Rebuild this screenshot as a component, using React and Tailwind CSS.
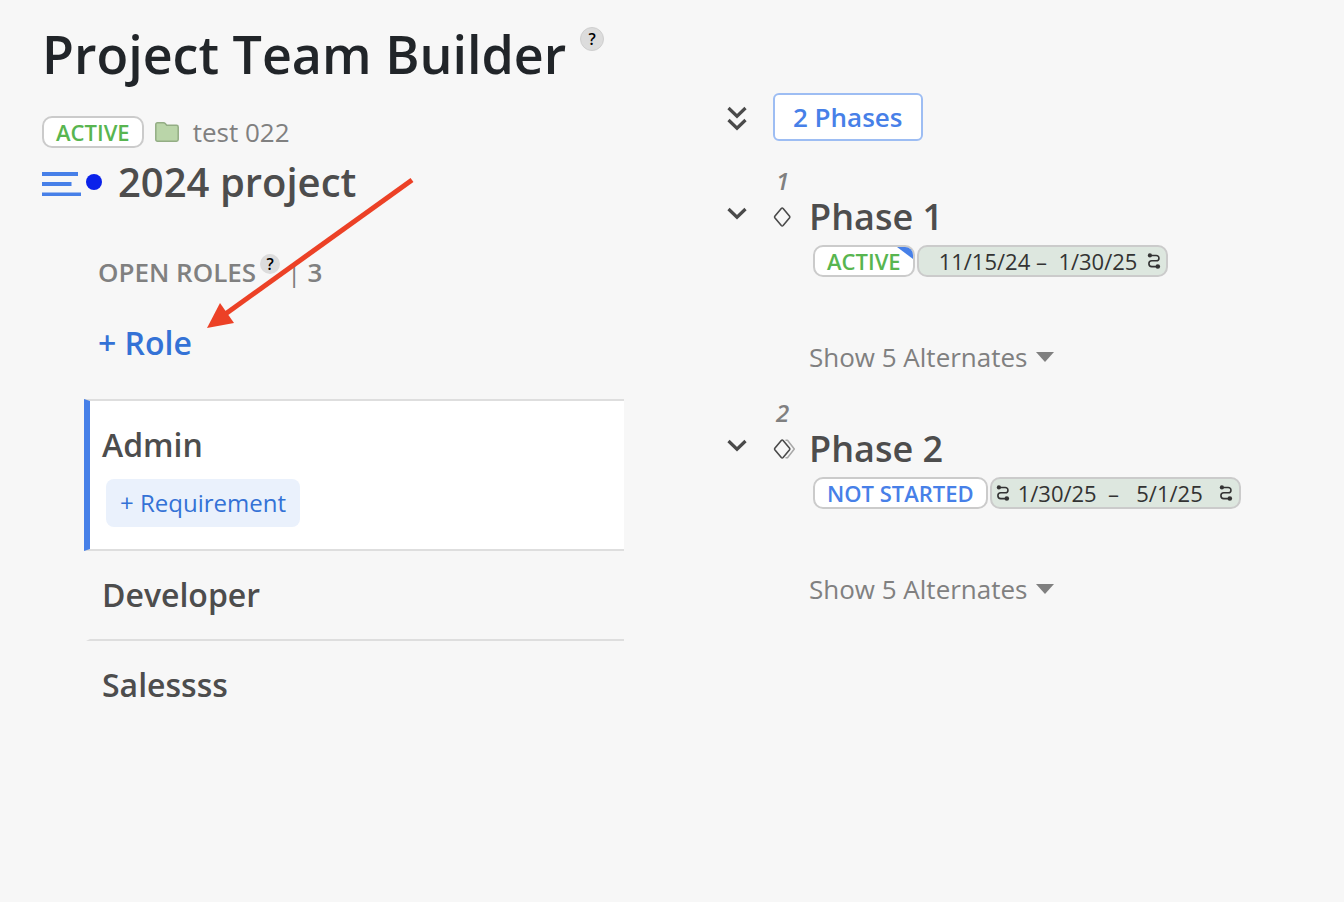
import clsx from "clsx";

const roles = [{ name: "Admin", selected: true }, { name: "Developer" }, { name: "Salessss" }];

const phases = [
  {
    number: 1,
    name: "Phase 1",
    status: "ACTIVE",
    flagged: true,
    dates: "11/15/24 –  1/30/25",
    datesClass: "pl-4",
    endLinkClass: "ml-[10px]",
  },
  {
    number: 2,
    name: "Phase 2",
    status: "NOT STARTED",
    linkedStart: true,
    stacked: true,
    dates: "1/30/25  –   5/1/25",
    datesClass: "pl-1",
    endLinkClass: "ml-4",
  },
];

const Help = ({ className, label }) => (
  <button
    type="button"
    aria-label={label}
    className={clsx(
      "flex shrink-0 items-center justify-center rounded-full bg-[#dcdcdc] font-semibold text-black",
      className
    )}
  >
    ?
  </button>
);

const StatusBadge = ({ status, flagged }) => (
  <span
    className={clsx(
      "relative flex h-8 items-center overflow-hidden rounded-[10px] border-2 border-[#cbcbcb] bg-white px-3 text-[22px] leading-7 font-semibold whitespace-nowrap",
      status === "ACTIVE" ? "text-[#58b550]" : "text-[#4780e8]"
    )}
  >
    {status}
    {flagged && (
      <svg className="absolute top-0 right-0 h-3 w-4" viewBox="0 0 16 12" fill="#4780e8">
        <path d="M0 0H16V12Z" />
      </svg>
    )}
  </span>
);

const LinkIcon = ({ className }) => (
  <svg className={clsx("h-4 w-[14px] shrink-0", className)} viewBox="0 0 14 16" fill="none">
    <path
      d="M3 2.5H9.3A2.6 2.6 0 0 1 9.3 7.8H4.8A2.9 2.9 0 0 0 4.8 13.6H10.5"
      stroke="#333"
      strokeWidth="1.6"
    />
    <circle cx="2.9" cy="2.4" r="2.1" fill="#333" />
    <circle cx="10.8" cy="13.5" r="2.3" fill="#333" />
  </svg>
);

const DateBadge = ({ phase }) => (
  <span className="flex h-8 w-[251px] items-center rounded-[10px] border-2 border-[#cbcbcb] bg-[#dde7df] px-1 text-[22px] leading-7 text-[#333]">
    {phase.linkedStart && <LinkIcon className="mr-1" />}
    <span className={clsx("whitespace-pre", phase.datesClass)}>{phase.dates}</span>
    <LinkIcon className={phase.endLinkClass} />
  </span>
);

const Chevron = ({ double }) => (
  <svg
    className={double ? "h-[26px] w-5" : "h-[14px] w-5"}
    viewBox={double ? "0 0 20 26" : "0 0 20 14"}
    fill="none"
    stroke="#4a4a4a"
    strokeWidth="3.2"
  >
    <path d="M1.5 2L10 10.2L18.5 2" />
    {double && <path d="M1.5 14L10 22.2L18.5 14" />}
  </svg>
);

const PhaseMarker = ({ stacked }) => (
  <svg className="h-6 w-6" viewBox="0 0 24 24" fill="none" strokeLinejoin="round">
    {stacked && (
      <path d="M12.5 3.3H14.5L21.3 12L14.5 20.8H12.5" stroke="#a8a8a8" strokeWidth="1.5" />
    )}
    <path
      d="M8.3 3.5Q9.2 2.5 10.1 3.5L16.6 11.3Q17.1 12 16.6 12.7L10.1 20.5Q9.2 21.5 8.3 20.5L1.8 12.7Q1.3 12 1.8 11.3Z"
      fill="#f7f7f7"
      stroke="#4a4a4a"
      strokeWidth="1.6"
    />
  </svg>
);

const Role = ({ role }) => (
  <li
    className={clsx(
      "border-b-2 border-[#dedede] pl-3 last:border-b-0",
      role.selected
        ? "border-t-2 border-l-[6px] border-l-[#4780e8] bg-white pt-6 pb-[22px]"
        : "ml-[2px] border-l-4 border-l-transparent py-6"
    )}
  >
    <h3 className="text-[32px] leading-10 font-semibold">{role.name}</h3>
    {role.selected && (
      <button
        type="button"
        className="mt-[14px] ml-1 h-12 rounded-lg bg-[#eaf1fc] px-[14px] text-2xl text-[#3472d6]"
      >
        + Requirement
      </button>
    )}
  </li>
);

const Phase = ({ phase }) => (
  <article className="grid grid-cols-[46px_36px_1fr]">
    <span className="col-start-2 pl-[3px] text-2xl leading-6 font-semibold text-[#808080] italic">
      {phase.number}
    </span>
    <button type="button" aria-label="Collapse phase" className="col-start-1 flex h-12 pt-[14px]">
      <Chevron />
    </button>
    <span className="flex h-12 items-center">
      <PhaseMarker stacked={phase.stacked} />
    </span>
    <h2 className="text-4xl leading-12 font-semibold">{phase.name}</h2>
    <div className="col-start-3 mt-1 ml-1 flex gap-[2px]">
      <StatusBadge status={phase.status} flagged={phase.flagged} />
      <DateBadge phase={phase} />
    </div>
    <button
      type="button"
      className="col-start-3 mt-16 flex items-center gap-2 text-[26px] leading-8 text-[#808080]"
    >
      Show 5 Alternates
      <svg className="h-[10px] w-[18px]" viewBox="0 0 18 10" fill="#808080">
        <path d="M0 0H18L9 10Z" />
      </svg>
    </button>
  </article>
);

const App = () => {
  return (
    <main className="relative grid min-h-screen grid-cols-[13fr_15fr] items-start bg-[#f7f7f7] font-['Open_Sans',sans-serif] text-[#4d4d4d]">
      <section className="pt-[22px] pl-[42px]">
        <header className="flex items-start gap-[14px]">
          <h1 className="text-[52px] leading-16 font-semibold whitespace-nowrap text-[#212529]">
            Project Team Builder
          </h1>
          <Help
            label="About the team builder"
            className="mt-[5px] h-6 w-6 border border-[#cfcfcf] text-base"
          />
        </header>

        <div className="mt-[30px] flex items-center">
          <StatusBadge status="ACTIVE" />
          <svg className="ml-[11px] h-5 w-6" viewBox="0 0 24 20">
            <path
              d="M2.5 0.8H8.5Q9.5 0.8 10.2 1.6L11.7 3.3H21.5Q23.2 3.3 23.2 5V17.5Q23.2 19.2 21.5 19.2H2.5Q0.8 19.2 0.8 17.5V2.5Q0.8 0.8 2.5 0.8Z"
              fill="#bad5a9"
              stroke="#93ad84"
              strokeWidth="1.5"
            />
          </svg>
          <a href="#" className="ml-[14px] text-[26px] leading-8 text-[#808080]">
            test 022
          </a>
        </div>

        <div className="mt-[10px] flex items-center">
          <svg className="h-7 w-10" viewBox="0 0 40 28" fill="#4780e8">
            <path d="M0 4H36V8H0ZM0 14H29.5V18H0ZM0 24.5H39V28H0Z" />
          </svg>
          <span className="ml-1 h-4 w-4 rounded-full bg-[#0a22ea]" />
          <h2 className="ml-4 text-[40px] leading-12 font-semibold">2024 project</h2>
        </div>

        <div className="mt-[50px] pl-[42px]">
          <div className="flex h-8 items-center pl-[14px] text-[26px] font-semibold text-[#808080]">
            OPEN ROLES
            <Help label="About open roles" className="mb-4 ml-1 h-5 w-5 text-base" />
            <span className="ml-[7px] font-normal">|</span>
            <span className="ml-[6px]">3</span>
          </div>
          <button
            type="button"
            className="mt-[35px] ml-[14px] text-[32px] leading-10 font-semibold text-[#3472d6]"
          >
            + Role
          </button>
          <ul className="mt-9">
            {roles.map((role) => (
              <Role key={role.name} role={role} />
            ))}
          </ul>
        </div>
      </section>

      <section className="pt-[93px] pl-[103px]">
        <div className="flex items-center gap-[26px]">
          <button type="button" aria-label="Collapse all phases" className="pt-1">
            <Chevron double />
          </button>
          <button
            type="button"
            className="h-12 rounded-md border-2 border-[#9dbdf3] bg-white px-[18px] text-[26px] leading-8 font-semibold text-[#4780e8]"
          >
            2 Phases
          </button>
        </div>
        <div className="mt-7 flex flex-col gap-7">
          {phases.map((phase) => (
            <Phase key={phase.number} phase={phase} />
          ))}
        </div>
      </section>

      {/* callout pointing at the add role button */}
      <svg
        className="pointer-events-none absolute top-[176px] left-[206px] h-[154px] w-[210px]"
        viewBox="0 0 210 154"
      >
        <path d="M206 4L18 139" stroke="#ec4126" strokeWidth="5" />
        <path d="M1 152L14 127L28 147Z" fill="#ec4126" />
      </svg>
    </main>
  );
};

export default App;
